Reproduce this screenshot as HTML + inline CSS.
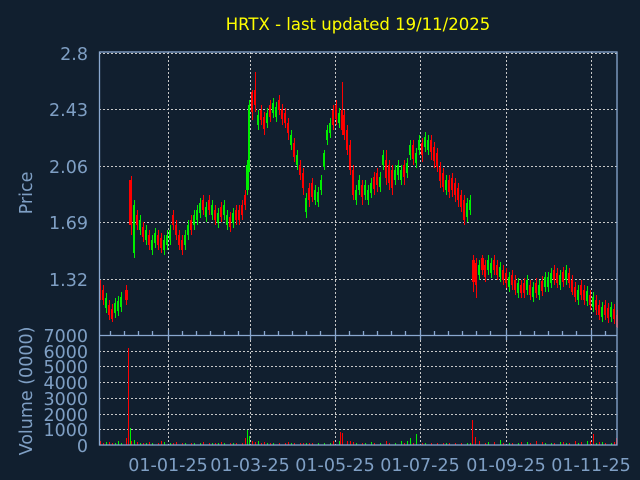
<!DOCTYPE html>
<html><head><meta charset="utf-8"><style>
html,body{margin:0;padding:0;background:#111f2f;width:640px;height:480px;overflow:hidden}
svg{display:block}
text{font-family:"DejaVu Sans","Liberation Sans",sans-serif}
</style></head><body>
<svg width="640" height="480" xmlns="http://www.w3.org/2000/svg">
<rect width="640" height="480" fill="#111f2f"/>
<text x="358" y="30" fill="#ffff00" font-size="16.5" text-anchor="middle">HRTX - last updated 19/11/2025</text>
<g stroke="#c8c8c8" stroke-width="1" stroke-dasharray="2,2" fill="none">
<line x1="99" y1="53.5" x2="617" y2="53.5"/>
<line x1="99" y1="109.5" x2="617" y2="109.5"/>
<line x1="99" y1="166.5" x2="617" y2="166.5"/>
<line x1="99" y1="222.5" x2="617" y2="222.5"/>
<line x1="99" y1="279.5" x2="617" y2="279.5"/>
<line x1="99" y1="351.5" x2="617" y2="351.5"/>
<line x1="99" y1="366.5" x2="617" y2="366.5"/>
<line x1="99" y1="382.5" x2="617" y2="382.5"/>
<line x1="99" y1="398.5" x2="617" y2="398.5"/>
<line x1="99" y1="414.5" x2="617" y2="414.5"/>
<line x1="99" y1="429.5" x2="617" y2="429.5"/>
<line x1="168.5" y1="52" x2="168.5" y2="445"/>
<line x1="250.5" y1="52" x2="250.5" y2="445"/>
<line x1="335.5" y1="52" x2="335.5" y2="445"/>
<line x1="420.5" y1="52" x2="420.5" y2="445"/>
<line x1="506.5" y1="52" x2="506.5" y2="445"/>
<line x1="591.5" y1="52" x2="591.5" y2="445"/>
</g>
<!-- red candles -->
<path stroke="#ff0000" stroke-width="1" fill="none" d="M100.5 280V300M103.5 285V305M109.5 300V320M112.5 304V322M126.5 285V305M131.5 176V235M137.5 210V230M143.5 222V242M149.5 230V250M158.5 230V250M161.5 233V253M173.5 210V230M176.5 220V240M179.5 230V250M182.5 235V255M191.5 215V235M203.5 195V215M209.5 195V215M215.5 205V225M221.5 202V222M230.5 212V232M236.5 205V225M239.5 205V225M242.5 200V220M245.5 190V210M252.5 90V120M255.5 72V112M261.5 105V125M264.5 112V135M270.5 100V122M279.5 95V115M282.5 104V125M285.5 108V128M288.5 118V140M294.5 138V162M300.5 160V180M303.5 168V195M309.5 183V207M312.5 178V202M333.5 105V130M336.5 100V125M342.5 82V135M344.5 110V140M347.5 125V155M350.5 140V175M353.5 165V200M362.5 180V205M374.5 172V195M377.5 168V192M386.5 150V185M389.5 160V190M392.5 165V195M404.5 160V185M413.5 140V165M422.5 138V162M431.5 135V160M434.5 142V168M437.5 148V172M440.5 162V188M443.5 168V192M449.5 175V198M452.5 173V197M455.5 178V202M458.5 183V207M461.5 190V212M464.5 195V225M473.5 255V292M476.5 258V298M482.5 255V275M485.5 260V282M494.5 255V275M497.5 260V280M503.5 265V285M506.5 268V288M512.5 270V290M515.5 275V295M521.5 280V298M524.5 278V298M530.5 280V300M536.5 278V298M542.5 276V296M554.5 265V285M557.5 268V288M563.5 267V287M569.5 268V288M572.5 275V295M575.5 282V302M581.5 280V300M584.5 285V305M590.5 290V310M596.5 295V315M599.5 300V320M605.5 300V320M608.5 303V323M614.5 304V324M617.5 310V328"/>
<g fill="#ff0000">
<rect x="99" y="285" width="2" height="10"/><rect x="102" y="290" width="2" height="10"/><rect x="108" y="305" width="2" height="10"/><rect x="111" y="309" width="2" height="10"/><rect x="125" y="290" width="3" height="10"/><rect x="129" y="180" width="3" height="45"/><rect x="136" y="215" width="2" height="10"/><rect x="142" y="227" width="2" height="10"/><rect x="148" y="235" width="2" height="10"/><rect x="157" y="235" width="2" height="10"/><rect x="160" y="238" width="2" height="10"/><rect x="172" y="215" width="2" height="10"/><rect x="175" y="225" width="2" height="10"/><rect x="178" y="235" width="2" height="10"/><rect x="181" y="240" width="2" height="10"/><rect x="190" y="220" width="2" height="10"/><rect x="202" y="200" width="2" height="10"/><rect x="208" y="200" width="2" height="10"/><rect x="214" y="210" width="2" height="10"/><rect x="220" y="207" width="2" height="10"/><rect x="229" y="217" width="2" height="10"/><rect x="235" y="210" width="2" height="10"/><rect x="238" y="210" width="2" height="10"/><rect x="241" y="205" width="2" height="10"/><rect x="244" y="195" width="2" height="10"/><rect x="251" y="92" width="2" height="20"/><rect x="254" y="90" width="2" height="15"/><rect x="260" y="110" width="2" height="10"/><rect x="263" y="117" width="2" height="12"/><rect x="269" y="105" width="2" height="12"/><rect x="278" y="100" width="2" height="10"/><rect x="281" y="109" width="2" height="10"/><rect x="284" y="113" width="2" height="10"/><rect x="287" y="123" width="2" height="10"/><rect x="293" y="143" width="2" height="14"/><rect x="299" y="165" width="2" height="10"/><rect x="302" y="173" width="2" height="15"/><rect x="308" y="188" width="2" height="12"/><rect x="311" y="183" width="2" height="14"/><rect x="332" y="110" width="2" height="15"/><rect x="335" y="105" width="2" height="14"/><rect x="341" y="110" width="2" height="20"/><rect x="343" y="115" width="2" height="20"/><rect x="346" y="130" width="2" height="20"/><rect x="349" y="145" width="2" height="25"/><rect x="352" y="170" width="2" height="25"/><rect x="361" y="185" width="2" height="12"/><rect x="373" y="177" width="2" height="12"/><rect x="376" y="173" width="2" height="12"/><rect x="385" y="160" width="2" height="18"/><rect x="388" y="165" width="2" height="18"/><rect x="391" y="170" width="2" height="18"/><rect x="403" y="165" width="2" height="12"/><rect x="412" y="145" width="2" height="14"/><rect x="421" y="143" width="2" height="12"/><rect x="430" y="140" width="2" height="12"/><rect x="433" y="147" width="2" height="14"/><rect x="436" y="153" width="2" height="14"/><rect x="439" y="167" width="2" height="14"/><rect x="442" y="173" width="2" height="14"/><rect x="448" y="180" width="2" height="12"/><rect x="451" y="178" width="2" height="12"/><rect x="454" y="183" width="2" height="12"/><rect x="457" y="188" width="2" height="12"/><rect x="460" y="195" width="2" height="12"/><rect x="463" y="200" width="2" height="20"/><rect x="472" y="260" width="3" height="22"/><rect x="475" y="263" width="2" height="22"/><rect x="481" y="258" width="3" height="12"/><rect x="484" y="265" width="2" height="12"/><rect x="493" y="260" width="2" height="10"/><rect x="496" y="265" width="2" height="10"/><rect x="502" y="270" width="2" height="10"/><rect x="505" y="273" width="2" height="10"/><rect x="511" y="275" width="2" height="10"/><rect x="514" y="280" width="2" height="10"/><rect x="520" y="285" width="2" height="8"/><rect x="523" y="283" width="2" height="10"/><rect x="529" y="285" width="2" height="10"/><rect x="535" y="283" width="2" height="10"/><rect x="541" y="281" width="2" height="10"/><rect x="553" y="270" width="2" height="10"/><rect x="556" y="273" width="2" height="10"/><rect x="562" y="272" width="2" height="10"/><rect x="568" y="273" width="2" height="10"/><rect x="571" y="280" width="2" height="12"/><rect x="574" y="287" width="2" height="10"/><rect x="580" y="285" width="2" height="10"/><rect x="583" y="290" width="2" height="10"/><rect x="589" y="295" width="2" height="10"/><rect x="595" y="300" width="2" height="10"/><rect x="598" y="305" width="2" height="10"/><rect x="604" y="305" width="2" height="10"/><rect x="607" y="308" width="2" height="10"/><rect x="613" y="309" width="2" height="10"/><rect x="616" y="315" width="2" height="12"/>
</g>
<!-- green candles -->
<path stroke="#00ee00" stroke-width="1" fill="none" d="M106.5 293V313M115.5 298V318M118.5 296V316M121.5 292V312M134.5 200V258M140.5 215V235M146.5 225V245M152.5 235V255M155.5 228V248M164.5 235V255M167.5 230V250M170.5 225V245M185.5 230V250M188.5 220V240M194.5 210V230M197.5 205V225M200.5 198V218M206.5 202V222M212.5 200V220M218.5 208V228M224.5 200V220M227.5 210V230M233.5 208V228M247.5 160V195M249.5 100V172M258.5 110V130M267.5 108V128M273.5 98V118M276.5 102V122M291.5 130V150M297.5 150V170M306.5 193V218M315.5 185V205M318.5 187V207M321.5 175V195M324.5 150V170M327.5 125V145M330.5 118V138M339.5 108V128M356.5 185V205M359.5 175V195M365.5 180V200M368.5 185V205M371.5 178V198M380.5 172V192M383.5 150V170M395.5 165V185M398.5 160V180M401.5 165V185M407.5 158V178M410.5 140V160M416.5 148V168M419.5 135V155M425.5 132V152M428.5 135V155M446.5 175V195M467.5 198V222M470.5 195V215M479.5 260V280M488.5 255V275M491.5 258V278M500.5 262V282M509.5 272V292M518.5 278V298M527.5 275V295M533.5 282V302M539.5 280V300M545.5 272V292M548.5 272V292M551.5 268V288M560.5 270V290M566.5 265V285M578.5 285V305M587.5 286V306M593.5 292V312M602.5 302V322M611.5 302V322"/>
<g fill="#00ee00">
<rect x="105" y="298" width="2" height="10"/><rect x="114" y="303" width="2" height="10"/><rect x="117" y="301" width="2" height="10"/><rect x="120" y="297" width="2" height="10"/><rect x="133" y="205" width="2" height="48"/><rect x="139" y="220" width="2" height="10"/><rect x="145" y="230" width="2" height="10"/><rect x="151" y="240" width="2" height="10"/><rect x="154" y="233" width="2" height="10"/><rect x="163" y="240" width="2" height="10"/><rect x="166" y="235" width="2" height="10"/><rect x="169" y="230" width="2" height="10"/><rect x="184" y="235" width="2" height="10"/><rect x="187" y="225" width="2" height="10"/><rect x="193" y="215" width="2" height="10"/><rect x="196" y="210" width="2" height="10"/><rect x="199" y="203" width="2" height="10"/><rect x="205" y="207" width="2" height="10"/><rect x="211" y="205" width="2" height="10"/><rect x="217" y="213" width="2" height="10"/><rect x="223" y="205" width="2" height="10"/><rect x="226" y="215" width="2" height="10"/><rect x="232" y="213" width="2" height="10"/><rect x="246" y="165" width="3" height="25"/><rect x="248" y="105" width="2" height="60"/><rect x="257" y="115" width="2" height="10"/><rect x="266" y="113" width="2" height="10"/><rect x="272" y="103" width="2" height="10"/><rect x="275" y="107" width="2" height="10"/><rect x="290" y="135" width="2" height="10"/><rect x="296" y="155" width="2" height="10"/><rect x="305" y="198" width="2" height="14"/><rect x="314" y="190" width="2" height="10"/><rect x="317" y="192" width="2" height="10"/><rect x="320" y="180" width="2" height="10"/><rect x="323" y="153" width="2" height="14"/><rect x="326" y="130" width="2" height="10"/><rect x="329" y="123" width="2" height="10"/><rect x="338" y="113" width="2" height="10"/><rect x="355" y="190" width="2" height="10"/><rect x="358" y="180" width="2" height="10"/><rect x="364" y="185" width="2" height="10"/><rect x="367" y="190" width="2" height="10"/><rect x="370" y="183" width="2" height="10"/><rect x="379" y="177" width="2" height="10"/><rect x="382" y="155" width="2" height="10"/><rect x="394" y="170" width="2" height="10"/><rect x="397" y="165" width="2" height="10"/><rect x="400" y="170" width="2" height="10"/><rect x="406" y="163" width="2" height="10"/><rect x="409" y="145" width="2" height="10"/><rect x="415" y="153" width="2" height="10"/><rect x="418" y="140" width="2" height="10"/><rect x="424" y="137" width="2" height="10"/><rect x="427" y="140" width="2" height="10"/><rect x="445" y="180" width="2" height="10"/><rect x="466" y="203" width="2" height="14"/><rect x="469" y="200" width="2" height="10"/><rect x="478" y="265" width="2" height="10"/><rect x="487" y="260" width="2" height="10"/><rect x="490" y="263" width="2" height="10"/><rect x="499" y="267" width="2" height="10"/><rect x="508" y="277" width="2" height="10"/><rect x="517" y="283" width="2" height="10"/><rect x="526" y="280" width="2" height="10"/><rect x="532" y="287" width="2" height="10"/><rect x="538" y="285" width="2" height="10"/><rect x="544" y="277" width="2" height="10"/><rect x="547" y="277" width="2" height="10"/><rect x="550" y="273" width="2" height="10"/><rect x="559" y="275" width="2" height="10"/><rect x="565" y="270" width="2" height="10"/><rect x="577" y="290" width="2" height="10"/><rect x="586" y="291" width="2" height="10"/><rect x="592" y="297" width="2" height="10"/><rect x="601" y="307" width="2" height="10"/><rect x="610" y="307" width="2" height="10"/>
</g>
<!-- volume -->
<path stroke="#ff0000" stroke-width="1" fill="none" d="M100.5 445V441M103.5 445V443M109.5 445V442M112.5 445V443M126.5 445V438M128.5 445V348M131.5 445V441M137.5 445V442M143.5 445V443M149.5 445V442M158.5 445V443M161.5 445V441M173.5 445V443M176.5 445V442M182.5 445V443M191.5 445V443M203.5 445V442M209.5 445V443M215.5 445V443M221.5 445V442M230.5 445V443M236.5 445V443M242.5 445V443M245.5 445V438M252.5 445V441M255.5 445V442M261.5 445V443M264.5 445V442M270.5 445V443M279.5 445V443M285.5 445V443M288.5 445V442M294.5 445V443M300.5 445V443M303.5 445V443M309.5 445V443M312.5 445V443M333.5 445V441M340.5 445V432M342.5 445V433M347.5 445V441M350.5 445V441M353.5 445V442M362.5 445V443M374.5 445V443M386.5 445V441M389.5 445V443M404.5 445V443M413.5 445V443M422.5 445V443M431.5 445V443M437.5 445V443M443.5 445V443M449.5 445V443M455.5 445V443M461.5 445V443M472.5 445V420M475.5 445V437M479.5 445V441M485.5 445V443M494.5 445V442M503.5 445V443M512.5 445V443M521.5 445V442M530.5 445V443M536.5 445V441M542.5 445V442M554.5 445V443M563.5 445V442M569.5 445V443M575.5 445V441M581.5 445V442M590.5 445V441M593.5 445V434M599.5 445V442M605.5 445V443M614.5 445V442M616.5 445V438"/>
<path stroke="#00ee00" stroke-width="1" fill="none" d="M99.5 445V441M106.5 445V442M115.5 445V443M118.5 445V441M121.5 445V443M130.5 445V428M134.5 445V440M140.5 445V443M146.5 445V443M152.5 445V443M164.5 445V442M170.5 445V443M185.5 445V443M194.5 445V443M200.5 445V443M212.5 445V443M218.5 445V443M224.5 445V443M233.5 445V443M247.5 445V430M249.5 445V436M258.5 445V441M267.5 445V443M273.5 445V443M291.5 445V443M306.5 445V443M318.5 445V443M324.5 445V443M330.5 445V443M339.5 445V441M356.5 445V443M365.5 445V443M371.5 445V442M380.5 445V443M395.5 445V443M401.5 445V441M407.5 445V441M410.5 445V438M416.5 445V434M425.5 445V443M446.5 445V443M467.5 445V443M470.5 445V443M488.5 445V442M500.5 445V440M509.5 445V443M518.5 445V443M527.5 445V442M545.5 445V443M551.5 445V443M560.5 445V442M566.5 445V443M578.5 445V443M587.5 445V441M596.5 445V443M602.5 445V442M611.5 445V443"/>
<g stroke="#8aa8d0" stroke-width="1.3" fill="none">
<rect x="99.5" y="52" width="517.5" height="393"/>
<line x1="99" y1="335.5" x2="617" y2="335.5"/>
<path d="M110.5 331V335M124.5 331V335M138.5 331V335M152.5 331V335M182.5 331V335M196.5 331V335M210.5 331V335M224.5 331V335M238.5 331V335M264.5 331V335M278.5 331V335M292.5 331V335M306.5 331V335M320.5 331V335M349.5 331V335M363.5 331V335M377.5 331V335M391.5 331V335M405.5 331V335M434.5 331V335M448.5 331V335M462.5 331V335M476.5 331V335M490.5 331V335M520.5 331V335M534.5 331V335M548.5 331V335M562.5 331V335M576.5 331V335M605.5 331V335M168.5 330V340M250.5 330V340M335.5 330V340M420.5 330V340M506.5 330V340M591.5 330V340"/>
</g>
<g fill="#7f9fc4" font-size="17.5" text-anchor="end">
<text x="88" y="60">2.8</text>
<text x="88" y="116">2.43</text>
<text x="88" y="173">2.06</text>
<text x="88" y="229">1.69</text>
<text x="88" y="286">1.32</text>
<text x="88" y="342">7000</text>
<text x="88" y="358">6000</text>
<text x="88" y="373">5000</text>
<text x="88" y="389">4000</text>
<text x="88" y="405">3000</text>
<text x="88" y="421">2000</text>
<text x="88" y="436">1000</text>
<text x="88" y="452">0</text>
<text x="32" y="193" transform="rotate(-90 32 193)" text-anchor="middle">Price</text>
<text x="32" y="391" transform="rotate(-90 32 391)" text-anchor="middle">Volume (0000)</text>
</g>
<g fill="#7f9fc4" font-size="17.5" text-anchor="middle">
<text x="168" y="471">01-01-25</text>
<text x="250" y="471">01-03-25</text>
<text x="335" y="471">01-05-25</text>
<text x="420" y="471">01-07-25</text>
<text x="506" y="471">01-09-25</text>
<text x="591" y="471">01-11-25</text>
</g>
</svg>
</body></html>
